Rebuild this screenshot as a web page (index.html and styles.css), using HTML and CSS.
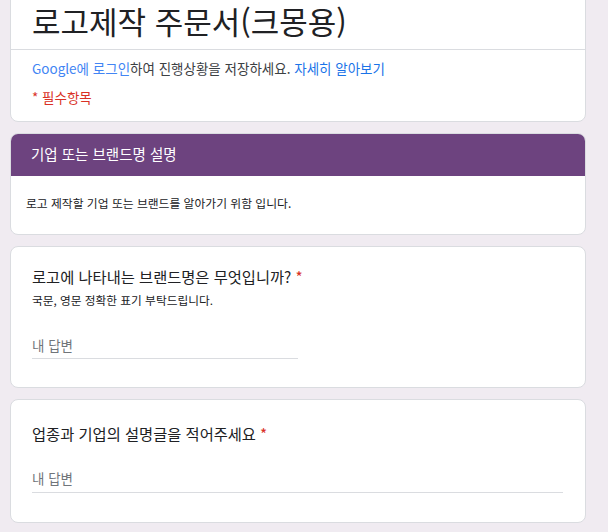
FILE: index.html
```html
<!DOCTYPE html>
<html lang="ko">

<head>
    <meta charset="UTF-8">
    <meta name="viewport" content="width=device-width, initial-scale=1.0">
    <title>로고제작 주문서(크몽용)</title>
    <link rel="stylesheet" href="styles.css">
</head>

<body>
    <div class="page">
        <!-- 제목 카드 -->
        <div class="card">
            <div class="form-title">로고제작 주문서(크몽용)</div>
            <div class="form-info">
                <div class="login-line">
                    <a href="#" class="link-light">Google에 로그인</a>하여 진행상황을 저장하세요.
                    <a href="#" class="link">자세히 알아보기</a>
                </div>
                <div class="required-note">* 필수항목</div>
            </div>
        </div>

        <!-- 섹션 -->
        <div class="card">
            <div class="section-head">기업 또는 브랜드명 설명</div>
            <div class="section-body">로고 제작할 기업 또는 브랜드를 알아가기 위함 입니다.</div>
        </div>

        <!-- 질문 1 -->
        <div class="card question">
            <div class="q-title">로고에 나타내는 브랜드명은 무엇입니까?<span class="req">*</span></div>
            <div class="q-help">국문, 영문 정확한 표기 부탁드립니다.</div>
            <input type="text" class="answer short" placeholder="내 답변">
        </div>

        <!-- 질문 2 -->
        <div class="card question">
            <div class="q-title">업종과 기업의 설명글을 적어주세요<span class="req">*</span></div>
            <input type="text" class="answer long" placeholder="내 답변">
        </div>
    </div>
</body>

</html>
```

FILE: styles.css
```css
/* 설문 양식 스타일 */
body {
    font-family: "Noto Sans CJK KR", "Noto Sans", sans-serif;
    margin: 0;
    padding: 0;
    background-color: #f0ebf1;
    color: #202124;
    overflow: hidden;
}

.page {
    width: 576px;
    margin: -24px 0 0 10px;
}

.card {
    background-color: #fff;
    border: 1px solid #dadce0;
    border-radius: 8px;
    margin-bottom: 11px;
    overflow: hidden;
}

.form-title {
    font-size: 31px;
    line-height: 40px;
    padding: 24px 21px 8px;
    border-bottom: 1px solid #dadce0;
}

.form-info {
    padding: 9px 21px 15px;
    font-size: 13.5px;
    line-height: 18px;
}

.login-line {
    color: #3c4043;
}

.login-line a {
    text-decoration: none;
}

.link-light {
    color: #4285f4;
}

.link {
    color: #1a73e8;
}

.required-note {
    color: #d93025;
    margin-top: 11px;
}

.section-head {
    background-color: #6d437f;
    color: #fff;
    font-size: 14.5px;
    line-height: 20px;
    padding: 11px 21px 12px;
    margin: -1px -1px 0;
}

.section-body {
    font-size: 11.8px;
    line-height: 16px;
    padding: 19px 15px 23px;
}

.question {
    padding: 19px 21px 28px;
}

.q-title {
    font-size: 15.3px;
    line-height: 20px;
}

.req {
    color: #d93025;
    margin-left: 4px;
}

.q-help {
    font-size: 11.7px;
    line-height: 16px;
    margin-top: 6px;
}

.answer {
    display: block;
    font-family: inherit;
    font-size: 13.5px;
    line-height: 20px;
    height: 24px;
    padding: 0 0 3px;
    margin-top: 27px;
    border: none;
    border-bottom: 1px solid #dadce0;
    outline: none;
    color: #202124;
    background: transparent;
    box-sizing: border-box;
}

.answer::placeholder {
    color: #70757a;
}

.short {
    width: 266px;
}

.long {
    width: 531px;
}

.question:last-child {
    padding-top: 23px;
    padding-bottom: 29px;
}

.question:last-child .answer {
    margin-top: 25px;
    height: 25px;
    padding-bottom: 4px;
}
```
